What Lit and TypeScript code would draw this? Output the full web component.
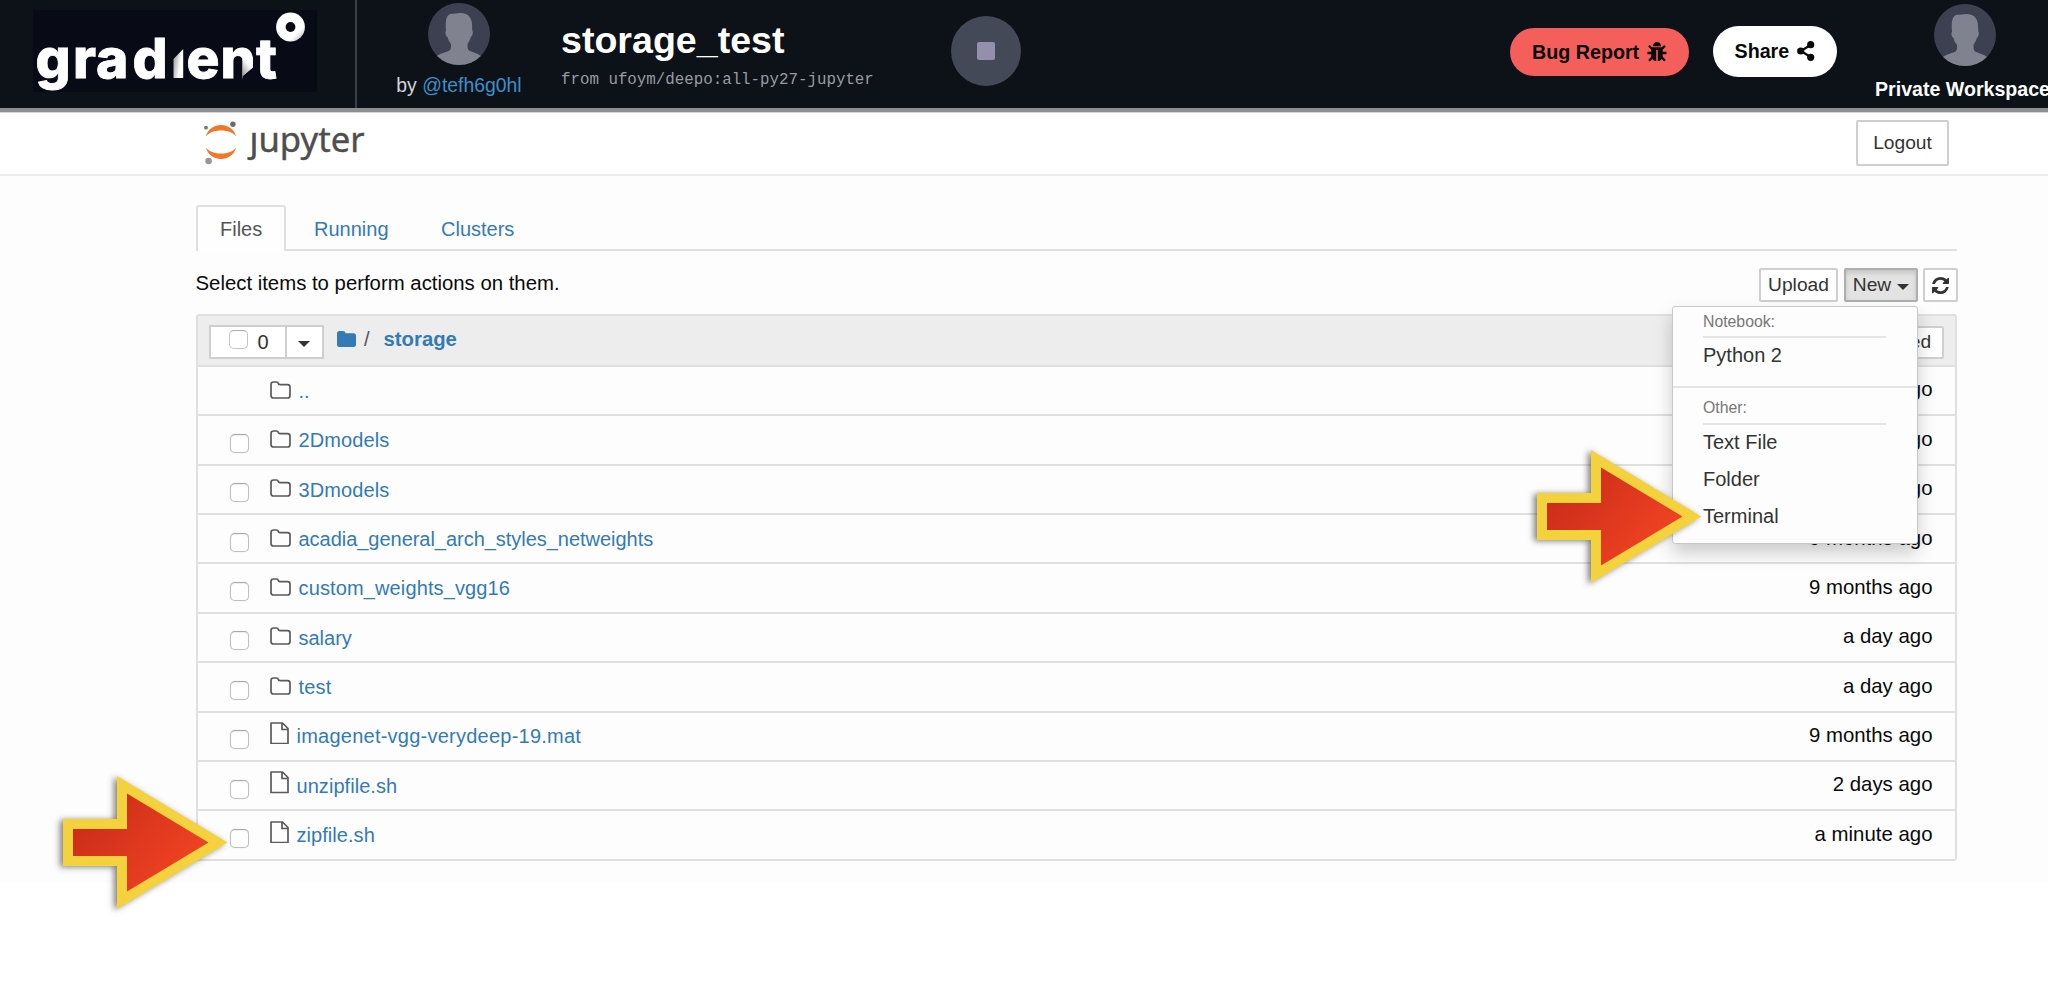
import { LitElement, html, css, svg } from "lit";
import { customElement, property } from "lit/decorators.js";
import { styleMap } from "lit/directives/style-map.js";

type Entry = { name: string; kind: "up" | "folder" | "file"; when: string; tracking?: number };

const entries: Entry[] = [
  { name: "..", kind: "up", when: "seconds ago" },
  { name: "2Dmodels", kind: "folder", when: "9 months ago", tracking: 0.1 },
  { name: "3Dmodels", kind: "folder", when: "9 months ago", tracking: 0.1 },
  { name: "acadia_general_arch_styles_netweights", kind: "folder", when: "9 months ago", tracking: -0.03 },
  { name: "custom_weights_vgg16", kind: "folder", when: "9 months ago", tracking: 0.13 },
  { name: "salary", kind: "folder", when: "a day ago" },
  { name: "test", kind: "folder", when: "a day ago", tracking: 0.2 },
  { name: "imagenet-vgg-verydeep-19.mat", kind: "file", when: "9 months ago", tracking: 0.24 },
  { name: "unzipfile.sh", kind: "file", when: "2 days ago", tracking: 0.05 },
  { name: "zipfile.sh", kind: "file", when: "a minute ago", tracking: 0.05 },
];

@customElement("user-avatar")
class UserAvatar extends LitElement {
  static styles = css`
    :host { display: block; width: 62px; height: 62px; }
    svg { display: block; }
  `;
  render() {
    return html`<svg width="62" height="62" viewBox="0 0 62 62">
      <defs><clipPath id="c"><circle cx="31" cy="31" r="31" /></clipPath></defs>
      <circle cx="31" cy="31" r="31" fill="#3c4050" />
      <path clip-path="url(#c)" fill="#80838f"
        d="M20 12.500C22 10 25 10.800 27.500 10.600C33 9.500 39 10 42 14.500C44.500 18 44 23 44.300 27.500C45.500 29 44.500 33 42.800 34C42 37.500 40.500 39 39.500 41C39.500 44 39.500 46 41 47.500C45 49.500 49.500 50 53 53L50 62H12L9 53C12.500 50 18 49.500 21.500 47.500C23.300 46 23.200 44 23 41C21.500 39 20.200 37 19.500 34C17.500 33 17 29 18 27.500C17.500 22 17.500 15.500 20 12.500Z" />
    </svg>`;
  }
}

@customElement("pointer-arrow")
class PointerArrow extends LitElement {
  static styles = css`
    :host { display: block; width: 165px; height: 134px; filter: drop-shadow(-3px 1px 3px rgba(0, 0, 0, 0.5)); }
    svg { display: block; }
  `;
  render() {
    return html`<svg width="165" height="134" viewBox="0 0 165 134">
      <defs>
        <linearGradient id="g" x1="0" y1="0.2" x2="1" y2="0.8">
          <stop offset="0" stop-color="#c92b19" /><stop offset="1" stop-color="#f54625" />
        </linearGradient>
      </defs>
      <path fill="#f4d23e" d="M0 43H54V0L164.500 66.500L54 133V90H0Z" />
      <path fill="url(#g)" d="M10 53H64V17.500L145.500 66.500L64 115.500V80H10Z" />
    </svg>`;
  }
}

@customElement("top-bar")
class TopBar extends LitElement {
  static styles = css`
    :host {
      display: flex; height: 108px; background: #0d1118; color: #fff;
      border-bottom: 4px solid #8f8f93; box-shadow: 0 1px 0 #d5d5d6; position: relative;
      overflow: hidden; box-sizing: content-box; white-space: nowrap; line-height: 1;
    }
    .brand { width: 357px; border-right: 2px solid #3b3d47; padding: 10px 0 0 33px; box-sizing: border-box; flex: none; }
    .brand svg { display: block; }
    .brand-text { font: 800 55px Inter, sans-serif; fill: #fff; stroke: #fff; stroke-width: 0.800px; }
    .owner { width: 125px; margin: 3px 0 0 39.500px; display: flex; flex-direction: column; align-items: center; flex: none; }
    .by { font-size: 19.400px; margin-top: 11px; color: #d3d4d8; }
    .handle { color: #3d8fc9; }
    .title { margin: 22px 0 0 39.500px; width: 391px; flex: none; }
    .name { font-size: 37.600px; font-weight: bold; }
    .from { font: 15.8px "Liberation Mono", monospace; line-height: 16px; color: #9a9ba2; margin-top: 12.500px; }
    .stop { width: 70px; height: 70px; border-radius: 50%; background: #434956; margin: 16px 0 0 -1px; display: grid; place-items: center; flex: none; }
    .square { width: 18px; height: 18px; background: #9490ab; border-radius: 2px; }
    .spacer { flex: 1; }
    .pill { border-radius: 26px; color: #0a0a0a; font-weight: bold; font-size: 19.700px; display: flex; align-items: center; flex: none; box-sizing: border-box; }
    .label { margin-top: 2px; }
    .bug { width: 179px; height: 48px; background: #f55f5b; margin: 27.500px 24px 0 0; padding-left: 22px; gap: 7.500px; }
    .share { width: 124px; height: 51px; background: #fff; margin: 25.500px 38px 0 0; padding-left: 21.500px; gap: 8px; }
    .workspace { width: 173px; margin-top: 4px; flex: none; }
    .workspace user-avatar { margin-left: 58.500px; }
    .ws-name { font-weight: bold; font-size: 19.600px; margin-top: 13.500px; }
  `;
  render() {
    return html`
      <div class="brand">
        <svg width="284" height="82" viewBox="33 10 284 82">
          <defs>
            <linearGradient id="i" x1="0" y1="0" x2="1" y2="0.4"><stop offset="0.1" stop-color="#a0a0a3" /><stop offset="0.8" stop-color="#fff" /></linearGradient>
            <linearGradient id="o" x1="0" y1="0" x2="1" y2="1"><stop offset="0.72" stop-color="#fff" /><stop offset="0.95" stop-color="#b5b5b5" /></linearGradient>
            <linearGradient id="n" x1="0" y1="1" x2="0.700" y2="0"><stop offset="0.1" stop-color="#a5a5a5" /><stop offset="0.700" stop-color="#fff" /></linearGradient>
          </defs>
          <rect x="33" y="10" width="284" height="82" fill="#080a16" />
          <text class="brand-text" y="78" x="35.500 73 96 132.500">grad</text>
          <path d="M173.500 59L183.200 49V78H173.500Z" fill="url(#i)" />
          <text class="brand-text" y="78" x="186.500 220.500 256">ent</text>
          <path d="M242.700 76L254.500 66V80H242.700Z" fill="#080a16" />
          <path d="M242.700 60L252.800 57V67.500L242.700 76Z" fill="url(#n)" />
          <circle cx="290.500" cy="27" r="14.400" fill="url(#o)" />
          <circle cx="290.500" cy="27" r="4.900" fill="#080a16" />
        </svg>
      </div>
      <div class="owner">
        <user-avatar></user-avatar>
        <div class="by">by <span class="handle">@tefh6g0hl</span></div>
      </div>
      <div class="title">
        <div class="name">storage_test</div>
        <div class="from">from ufoym/deepo:all-py27-jupyter</div>
      </div>
      <div class="stop"><div class="square"></div></div>
      <div class="spacer"></div>
      <div class="pill bug"><span class="label">Bug Report</span>
        <svg width="20" height="20" viewBox="0 0 20 20" fill="none" stroke="#0a0a0a" stroke-width="2.300">
          <path fill="#0a0a0a" stroke="none" d="M6 4.300C6 1.300 8 0 10 0S14 1.300 14 4.300ZM4.300 5.200H15.700V13C15.700 17 13.500 19 10.800 19V8H9.200V19C6.500 19 4.300 17 4.300 13Z" />
          <path d="M5.500 7.300L2 3.800M14.500 7.300L18 3.800M5 11H0.500M15 11H19.500M6 14.500L2 18.700M14 14.500L18 18.700" />
        </svg>
      </div>
      <div class="pill share"><span class="label">Share</span>
        <svg width="18" height="20" viewBox="0 0 18 20" fill="#0a0a0a">
          <path d="M13.500 4L4 10L13.500 16" fill="none" stroke="#0a0a0a" stroke-width="2.200" />
          <circle cx="13.700" cy="3.700" r="3.600" /><circle cx="3.700" cy="10" r="3.600" /><circle cx="13.700" cy="16.300" r="3.600" />
        </svg>
      </div>
      <div class="workspace">
        <user-avatar></user-avatar>
        <div class="ws-name">Private Workspace</div>
      </div>`;
  }
}

const folderOutline = svg`<path d="M1 3.500Q1 1 3.500 1H6.500Q8 1 8.300 2.500Q8.500 3.600 10 3.600H17.500Q20 3.600 20 6V14.500Q20 17 17.500 17H3.500Q1 17 1 14.500Z" />`;
const fileOutline = svg`<path d="M1 1H12.500L18 6.500V21.500H1ZM12 1.500V7.500H17.500" />`;

@customElement("file-row")
class FileRow extends LitElement {
  @property({ attribute: false }) entry!: Entry;
  static styles = css`
    :host { display: flex; align-items: center; height: 49.370px; box-sizing: border-box; border-bottom: 2px solid #e0e0e0; padding: 0 22.500px 0 32px; font-size: 20px; line-height: 24px; }
    .check { width: 19px; height: 19px; margin-right: 20.500px; flex: none; }
    .box { width: 19px; height: 19px; box-sizing: border-box; border: 1.500px solid #c0c0c0; border-top-color: #aaa; border-radius: 5px; background: #fff; margin-top: 3.500px; box-shadow: inset 0 1px 1px #eee, 0 0 1px #ccc; }
    svg { display: block; fill: none; stroke: #5a5a5a; stroke-width: 1.700; stroke-linejoin: round; flex: none; }
    .folder { margin: 0 8px 2px 0; }
    .file { margin: 0 8px 6px 0; }
    .name { color: #337ab7; flex: 1; margin-top: 0.500px; }
    .when { color: #0a0a0a; font-size: 20.400px; margin-bottom: 2.500px; }
  `;
  render() {
    const e = this.entry;
    return html`
      <div class="check">${e.kind === "up" ? "" : html`<div class="box"></div>`}</div>
      ${e.kind === "file"
        ? html`<svg class="file" width="19" height="22.500">${fileOutline}</svg>`
        : html`<svg class="folder" width="21" height="18">${folderOutline}</svg>`}
      <div class="name" style=${styleMap({ letterSpacing: `${e.tracking ?? 0}px` })}>${e.name}</div>
      <div class="when">${e.when}</div>`;
  }
}

@customElement("new-menu")
class NewMenu extends LitElement {
  static styles = css`
    :host { display: block; box-sizing: border-box; width: 246px; height: 238px; background: #fdfdfd; border: 1.500px solid #c8c8c8; border-radius: 3px; box-shadow: 0 9px 18px rgba(0, 0, 0, 0.2); color: #333; font-size: 20px; }
    .head { margin: 0 31px 0 30px; font-size: 15.800px; line-height: 18px; color: #777; border-bottom: 2px solid #e5e5e5; }
    .head.first { padding-top: 6px; height: 23px; }
    .head.other { padding-top: 11px; height: 23.500px; }
    .item { padding-left: 30px; line-height: 35px; height: 37px; }
    .rule { border-top: 2px solid #e5e5e5; margin-top: 11px; }
  `;
  render() {
    return html`
      <div class="head first">Notebook:</div>
      <div class="item">Python 2</div>
      <div class="rule"></div>
      <div class="head other">Other:</div>
      <div class="item">Text File</div>
      <div class="item">Folder</div>
      <div class="item">Terminal</div>`;
  }
}

@customElement("app-root")
class AppRoot extends LitElement {
  static styles = css`
    :host { display: block; position: relative; width: 2048px; height: 994px; overflow: hidden; background: #fff; font-family: "Liberation Sans", Arial, sans-serif; color: #0a0a0a; white-space: nowrap; }
    .page { background: #fdfdfd; height: 771px; }
    .nav { height: 64px; box-sizing: border-box; border-bottom: 2px solid #ececec; display: flex; justify-content: space-between; padding: 8px 99px 0 203px; background: #fff; }
    .logo { display: block; overflow: visible; }
    .logo-text { font: 35.200px "Noto Sans", "Open Sans", sans-serif; fill: #4e4e4e; stroke: #4e4e4e; stroke-width: 0.400px; }
    .logout { width: 93px; height: 46px; box-sizing: border-box; border: 2px solid #cfcfcf; border-radius: 2px; background: #fff; color: #333; font-size: 19.200px; display: grid; place-items: center; }
    .content { margin: 29px 91px 0 196px; }
    .tabs { display: flex; height: 46px; box-sizing: border-box; border-bottom: 2px solid #e0e0e0; font-size: 20px; line-height: 48px; color: #337ab7; }
    .active { box-sizing: border-box; width: 90px; height: 46px; border: 2px solid #e0e0e0; border-bottom: 0; border-radius: 3px 3px 0 0; background: #fefefe; color: #555; padding-left: 22px; line-height: 44px; margin-right: 28px; }
    .running { width: 127px; }
    .tools { height: 63px; display: flex; align-items: flex-start; color: #333; }
    .hint { flex: 1; font-size: 20.350px; line-height: 24px; margin: 20px 0 0 -0.500px; color: #0a0a0a; }
    .btn { box-sizing: border-box; height: 34px; border: 2px solid #cfcfcf; border-radius: 2px; background: #fff; font-size: 19.200px; display: flex; align-items: center; justify-content: center; margin-top: 17px; }
    .upload { width: 79px; margin-right: 6px; }
    .new { width: 74px; margin-right: 5px; background: #e3e3e3; border-color: #aeaeae; box-shadow: inset 0 3px 5px rgba(0, 0, 0, 0.130); gap: 6px; }
    .refresh { width: 35px; margin-right: -1px; }
    .caret { width: 0; height: 0; border: 6px solid transparent; border-top: 6.500px solid #333; border-bottom: 0; margin-top: 3px; }
    .list { border: 2px solid #e0e0e0; border-radius: 3px; border-bottom-width: 0; }
    .list-head { height: 51px; box-sizing: border-box; background: #ededed; border-bottom: 2px solid #e0e0e0; display: flex; align-items: center; padding: 0 11px; font-size: 20px; color: #333; }
    .select { display: flex; width: 115px; height: 34px; box-sizing: border-box; border: 2px solid #cfcfcf; background: #fff; margin: 3px 13px 0 0; }
    .count { border-right: 2px solid #cfcfcf; display: flex; align-items: center; padding-left: 18px; gap: 9.500px; box-sizing: content-box; width: 55.500px; }
    .num { margin-top: 1px; }
    .box { width: 19px; height: 19px; box-sizing: border-box; border: 1.500px solid #c4c4c4; border-top-color: #aaa; border-radius: 5px; background: #fff; margin-bottom: 6px; }
    .drop { flex: 1; display: grid; place-items: center; }
    .slash { margin: 0 14px 2px 7px; color: #555; }
    .crumb { font-weight: bold; font-size: 20.300px; color: #337ab7; flex: 1; margin-bottom: 2px; }
    .crumb-icon { margin-bottom: 3px; }
    .modified { margin-top: 3px; width: 138px; height: 33px; padding-right: 2px; }
    .menu { position: absolute; left: 1672px; top: 306px; }
    .arrow-menu { position: absolute; left: 1537px; top: 450px; }
    .arrow-file { position: absolute; left: 63px; top: 775.500px; }
  `;
  render() {
    return html`
      <top-bar></top-bar>
      <div class="page">
        <div class="nav">
          <svg class="logo" width="170" height="50" viewBox="203 120 170 50">
            <path fill="#f37726" d="M205.800 136.500C208 129 214 125 221 125S234 129 236.200 136.500C233 132.500 227.500 130.500 221 130.500S209 132.500 205.800 136.500Z" />
            <path fill="#f37726" d="M205.800 147.500C208 155 214 159 221 159S234 155 236.200 147.500C233 151.500 227.500 153.500 221 153.500S209 151.500 205.800 147.500Z" />
            <circle cx="206" cy="127.700" r="1.900" fill="#767677" />
            <circle cx="232.900" cy="124.300" r="2.700" fill="#6b6b6b" />
            <circle cx="208.600" cy="161" r="3.300" fill="#989798" />
            <text class="logo-text" x="249.500" y="151.500" textLength="115" lengthAdjust="spacingAndGlyphs">ȷupyter</text>
          </svg>
          <div class="logout">Logout</div>
        </div>
        <div class="content">
          <div class="tabs"><div class="active">Files</div><div class="running">Running</div><div>Clusters</div></div>
          <div class="tools">
            <div class="hint">Select items to perform actions on them.</div>
            <div class="btn upload">Upload</div>
            <div class="btn new">New<span class="caret"></span></div>
            <div class="btn refresh">
              <svg width="17" height="17" viewBox="0 0 1536 1536" fill="#333"><path d="M1511 928q0 5-1 7-64 268-268 434.500T764 1536q-146 0-282.500-55T238 1324l-129 129q-19 19-45 19t-45-19-19-45V960q0-26 19-45t45-19h448q26 0 45 19t19 45-19 45l-137 137q71 66 161 102t187 36q134 0 250-65t186-179q11-17 53-117 8-23 30-23h192q13 0 22.500 9.500t9.500 22.500zm25-800v448q0 26-19 45t-45 19h-448q-26 0-45-19t-19-45 19-45l138-138Q969 256 768 256q-134 0-250 65T332 500q-11 17-53 117-8 23-30 23H50q-13 0-22.500-9.500T18 608v-7q65-268 270-434.500T768 0q146 0 284 55.500T1297 212l130-129q19-19 45-19t45 19 19 45z" /></svg>
            </div>
          </div>
          <div class="list">
            <div class="list-head">
              <div class="select">
                <div class="count"><span class="box"></span><span class="num">0</span></div>
                <div class="drop"><span class="caret"></span></div>
              </div>
              <svg class="crumb-icon" width="20" height="16" fill="#337ab7"><path d="M0 2.500Q0 0 2.500 0H6Q8.500 0 8.500 2.300H16.500Q19 2.300 19 4.800V13.500Q19 16 16.500 16H2.500Q0 16 0 13.500Z" /></svg>
              <span class="slash">/</span>
              <span class="crumb">storage</span>
              <div class="btn modified">Last Modified</div>
            </div>
            ${entries.map((e) => html`<file-row .entry=${e}></file-row>`)}
          </div>
        </div>
      </div>
      <new-menu class="menu"></new-menu>
      <pointer-arrow class="arrow-menu"></pointer-arrow>
      <pointer-arrow class="arrow-file"></pointer-arrow>`;
  }
}
